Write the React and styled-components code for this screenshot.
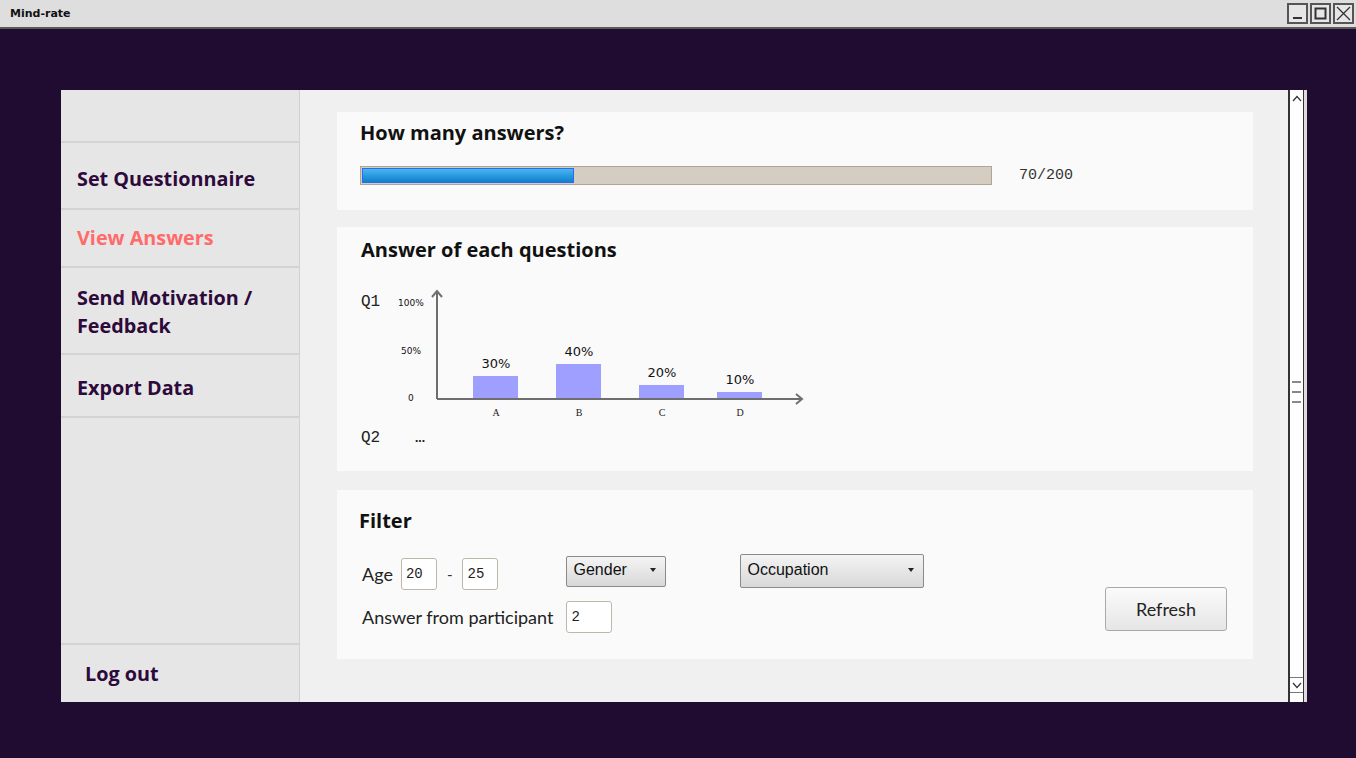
import React from "react";
import styled, { createGlobalStyle } from "styled-components";

const Global = createGlobalStyle`
  html, body { margin: 0; padding: 0; }
  body { width: 1356px; height: 758px; overflow: hidden; background: #200b31; font-family: Lato, "Open Sans", sans-serif; }
  * { box-sizing: border-box; }
`;

const Screen = styled.div`
  width: 1356px;
  height: 758px;
  display: flex;
  flex-direction: column;
  background: #200b31;
`;

const TitleBar = styled.div`
  height: 29px;
  background: #dedede;
  border-bottom: 2px solid #5a5a5a;
  display: flex;
  align-items: center;
  justify-content: space-between;
  padding: 0 2px 0 10px;
`;

const TitleText = styled.span`
  font-family: "DejaVu Sans", sans-serif;
  font-weight: bold;
  font-size: 11px;
  color: #111;
`;

const WinButtons = styled.div`
  display: flex;
  gap: 2px;
`;

const WinButton = styled.div`
  width: 21px;
  height: 21px;
  border: 2px solid #555;
  background: #e6e6e6;
  display: flex;
  align-items: center;
  justify-content: center;
`;

const Stage = styled.div`
  flex: 1;
  padding: 61px 49px 0 61px;
`;

const Window = styled.div`
  height: 612px;
  display: flex;
  background: #f0f0f0;
`;

const Sidebar = styled.nav`
  width: 239px;
  background: #e6e6e6;
  border-right: 1px solid #d2d2d2;
  display: flex;
  flex-direction: column;
`;

const NavItem = styled.div`
  height: ${(p) => p.$h}px;
  border-bottom: ${(p) => (p.$noBorder ? "none" : "2px solid #d3d3d3")};
  border-top: ${(p) => (p.$topBorder ? "2px solid #d3d3d3" : "none")};
  display: flex;
  align-items: center;
  padding-left: ${(p) => p.$pl || 16}px;
  padding-top: ${(p) => p.$pt || 0}px;
  font-family: "Open Sans", Lato, sans-serif;
  font-weight: 700;
  font-size: 19.8px;
  line-height: 28px;
  color: ${(p) => (p.$active ? "#ff6b6b" : "#2d0a3b")};
  flex: ${(p) => (p.$grow ? 1 : "none")};
`;

const Content = styled.main`
  flex: 1;
  padding: 22px 35px 0 37px;
  display: flex;
  flex-direction: column;
`;

const Card = styled.section`
  background: #fafafa;
  height: ${(p) => p.$h}px;
  margin-bottom: ${(p) => p.$mb || 0}px;
  padding: ${(p) => p.$pt}px 24px 0 ${(p) => p.$pl || 23}px;
  position: relative;
`;

const CardTitle = styled.h2`
  margin: 0;
  font-family: "Open Sans", Lato, sans-serif;
  font-weight: 700;
  font-size: 20px;
  line-height: 24px;
  color: #111;
`;

const ProgressRow = styled.div`
  display: flex;
  align-items: center;
  margin-top: 21px;
`;

const Track = styled.div`
  width: 632px;
  height: 19px;
  background: #d5cdc1;
  border: 1px solid #aea596;
  padding: 1px;
`;

const Fill = styled.div`
  height: 100%;
  background: linear-gradient(#49b5f0, #1080d0);
  border: 1px solid #2a6cf0;
`;

const Count = styled.span`
  margin-left: 27px;
  font-family: "Liberation Mono", monospace;
  font-size: 15px;
  color: #333;
`;

const ChartRow = styled.div`
  display: flex;
  align-items: flex-start;
  margin-top: 28px;
`;

const QLabel = styled.span`
  font-family: "Liberation Mono", monospace;
  font-size: 16px;
  color: #222;
  width: 34px;
  line-height: 20px;
  margin-top: ${(p) => p.$mt || 0}px;
`;

const Dots = styled.span`
  font-family: Lato, sans-serif;
  font-weight: bold;
  font-size: 14px;
  margin-left: 20px;
  color: #222;
`;

const Q2Row = styled.div`
  display: flex;
  align-items: baseline;
  margin-top: 5px;
`;

const FilterBody = styled.div`
  display: flex;
  flex-direction: column;
  gap: 11px;
  margin-top: 25px;
  padding-left: 3px;
`;

const Row = styled.div`
  display: flex;
  align-items: center;
`;

const Label = styled.span`
  font-family: Lato, "Open Sans", sans-serif;
  font-size: 18px;
  color: #222;
  margin-right: ${(p) => p.$mr || 8}px;
`;

const TextBox = styled.div`
  width: ${(p) => p.$w}px;
  height: 32px;
  border: 1px solid #bdb6aa;
  border-radius: 3px;
  background: #fff;
  font-family: "Liberation Mono", monospace;
  font-size: 14px;
  color: #222;
  display: flex;
  align-items: center;
  padding-left: 4px;
`;

const Dash = styled.span`
  margin: 0 10px;
  font-family: Lato, sans-serif;
  font-size: 15px;
  color: #333;
`;

const Select = styled.div`
  width: ${(p) => p.$w}px;
  height: ${(p) => p.$h}px;
  margin-left: ${(p) => p.$ml}px;
  margin-top: ${(p) => p.$mt || 0}px;
  border: 1px solid #8a8a8a;
  border-radius: 2px;
  background: linear-gradient(#f4f4f4, #d8d8d8);
  display: flex;
  align-items: center;
  justify-content: space-between;
  padding: 0 9px 2px 6px;
  font-family: "Liberation Sans", Arial, sans-serif;
  font-size: 16px;
  color: #111;
`;

const Caret = styled.span`
  width: 0;
  height: 0;
  border-left: 3px solid transparent;
  border-right: 3px solid transparent;
  border-top: 4px solid #222;
`;

const RefreshButton = styled.button`
  position: absolute;
  right: 26px;
  bottom: 28px;
  width: 122px;
  height: 44px;
  border: 1px solid #a9a9a9;
  border-radius: 3px;
  background: linear-gradient(#fbfbfb, #e6e6e6);
  font-family: Lato, "Open Sans", sans-serif;
  font-size: 18px;
  color: #222;
`;

const ScrollBar = styled.div`
  width: 19px;
  background: #dcdcdc;
  padding-right: 3px;
  display: flex;
`;

const ScrollTrack = styled.div`
  flex: 1;
  background: #fff;
  border-left: 2px solid #333;
  border-right: 1px solid #333;
  display: flex;
  flex-direction: column;
  justify-content: space-between;
  align-items: center;
`;

const ScrollEnd = styled.div`
  width: 100%;
  height: 16px;
  display: flex;
  align-items: center;
  justify-content: center;
  border-top: ${(p) => (p.$bottom ? "1px solid #777" : "none")};
  border-bottom: ${(p) => (p.$bottom ? "1px solid #777" : "none")};
  margin-bottom: ${(p) => (p.$bottom ? 9 : 0)}px;
`;

const Grip = styled.div`
  display: flex;
  flex-direction: column;
  gap: 8px;
`;

const GripLine = styled.div`
  width: 9px;
  height: 2px;
  background: #888;
`;

function Chart() {
  const bars = [
    { l: "A", v: "30%", x: 78, h: 23 },
    { l: "B", v: "40%", x: 161, h: 35 },
    { l: "C", v: "20%", x: 244, h: 14 },
    { l: "D", v: "10%", x: 322, h: 7 },
  ];
  const base = 116;
  return (
    <svg width="420" height="140" viewBox="0 0 420 140" style={{ marginTop: -7 }}>
      <g fontFamily="'DejaVu Sans', sans-serif" fontSize="9" fill="#111">
        <text x="3" y="23">100%</text>
        <text x="6" y="71">50%</text>
        <text x="13" y="118">0</text>
      </g>
      {bars.map((b) => (
        <g key={b.l}>
          <rect x={b.x} y={base - b.h} width="45" height={b.h} fill="#9f9fff" />
          <text x={b.x + 23} y={base - b.h - 8} textAnchor="middle" fontFamily="'DejaVu Sans', sans-serif" fontSize="13" fill="#111">{b.v}</text>
          <text x={b.x + 23} y={base + 17} textAnchor="middle" fontFamily="'Liberation Serif', serif" fontSize="10" fill="#222">{b.l}</text>
        </g>
      ))}
      <g stroke="#6e6e6e" strokeWidth="2" fill="none">
        <path d="M42 116 V8" />
        <path d="M37 14 L42 8 L47 14" />
        <path d="M42 116 H407" />
        <path d="M401 111 L407 116 L401 121" />
      </g>
    </svg>
  );
}

export default function App() {
  return (
    <Screen>
      <Global />
      <TitleBar>
        <TitleText>Mind-rate</TitleText>
        <WinButtons>
          <WinButton>
            <svg width="15" height="15" viewBox="0 0 15 15"><path d="M3 12 H12" stroke="#333" strokeWidth="2" /></svg>
          </WinButton>
          <WinButton>
            <svg width="15" height="15" viewBox="0 0 15 15"><rect x="2.5" y="2.5" width="10" height="10" stroke="#333" strokeWidth="2" fill="none" /></svg>
          </WinButton>
          <WinButton>
            <svg width="15" height="15" viewBox="0 0 15 15"><path d="M1 1 L14 14 M14 1 L1 14" stroke="#333" strokeWidth="1.3" /></svg>
          </WinButton>
        </WinButtons>
      </TitleBar>
      <Stage>
        <Window>
          <Sidebar>
            <NavItem $h={53} />
            <NavItem $h={67} $pt={6}>Set Questionnaire</NavItem>
            <NavItem $h={58} $active>View Answers</NavItem>
            <NavItem $h={87} $pt={3}>Send Motivation /<br />Feedback</NavItem>
            <NavItem $h={63} $pt={4}>Export Data</NavItem>
            <NavItem $grow $noBorder />
            <NavItem $h={59} $topBorder $noBorder $pl={24}>Log out</NavItem>
          </Sidebar>
          <Content>
            <Card $h={98} $mb={17} $pt={9}>
              <CardTitle>How many answers?</CardTitle>
              <ProgressRow>
                <Track>
                  <Fill style={{ width: `${(70 / 200) * 100 - 1.2}%` }} />
                </Track>
                <Count>70/200</Count>
              </ProgressRow>
            </Card>
            <Card $h={244} $mb={19} $pt={11} $pl={24}>
              <CardTitle>Answer of each questions</CardTitle>
              <ChartRow>
                <QLabel $mt={2}>Q1</QLabel>
                <Chart />
              </ChartRow>
              <Q2Row>
                <QLabel>Q2</QLabel>
                <Dots>...</Dots>
              </Q2Row>
            </Card>
            <Card $h={169} $pt={19} $pl={22}>
              <CardTitle>Filter</CardTitle>
              <FilterBody>
                <Row>
                  <Label $mr={8}>Age</Label>
                  <TextBox $w={36}>20</TextBox>
                  <Dash>-</Dash>
                  <TextBox $w={36}>25</TextBox>
                  <Select $w={100} $h={31} $ml={68} $mt={-6}>Gender<Caret /></Select>
                  <Select $w={184} $h={34} $ml={74} $mt={-6}>Occupation<Caret /></Select>
                </Row>
                <Row>
                  <Label $mr={13}>Answer from participant</Label>
                  <TextBox $w={46}>2</TextBox>
                </Row>
              </FilterBody>
              <RefreshButton>Refresh</RefreshButton>
            </Card>
          </Content>
          <ScrollBar>
            <ScrollTrack>
              <ScrollEnd>
                <svg width="10" height="7" viewBox="0 0 10 7"><path d="M1 6 L5 1.5 L9 6" stroke="#333" strokeWidth="1.2" fill="none" /></svg>
              </ScrollEnd>
              <Grip>
                <GripLine />
                <GripLine />
                <GripLine />
              </Grip>
              <ScrollEnd $bottom>
                <svg width="10" height="7" viewBox="0 0 10 7"><path d="M1 1 L5 5.5 L9 1" stroke="#333" strokeWidth="1.2" fill="none" /></svg>
              </ScrollEnd>
            </ScrollTrack>
          </ScrollBar>
        </Window>
      </Stage>
    </Screen>
  );
}
